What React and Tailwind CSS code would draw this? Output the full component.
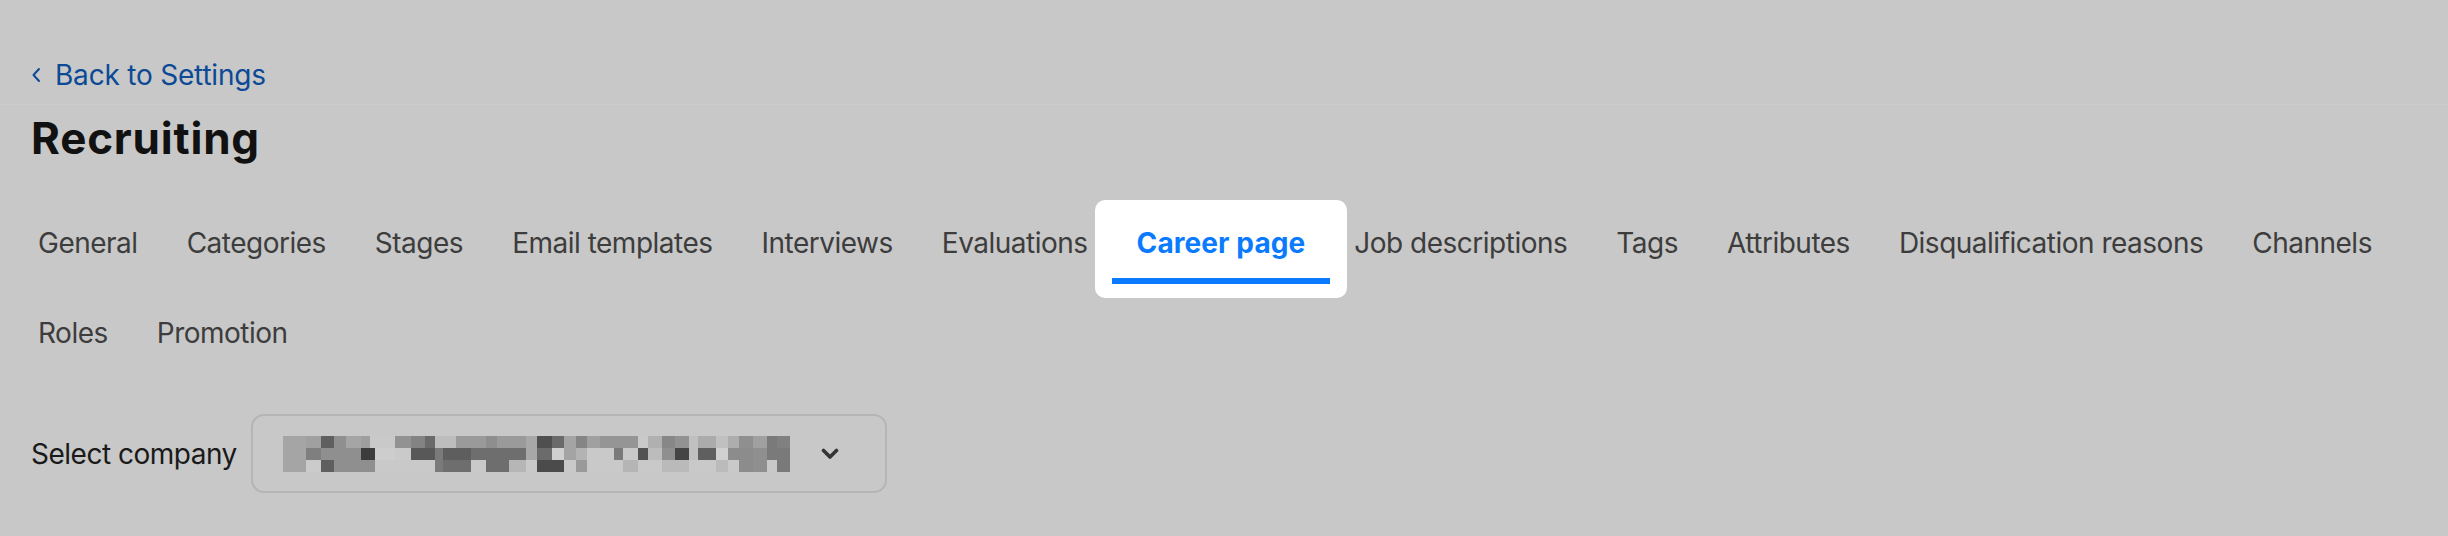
import React from 'react';

const TABS = [
  'General',
  'Categories',
  'Stages',
  'Email templates',
  'Interviews',
  'Evaluations',
  'Career page',
  'Job descriptions',
  'Tags',
  'Attributes',
  'Disqualification reasons',
  'Channels',
  'Roles',
  'Promotion',
];

const ACTIVE = 'Career page';

// blurred company name: column x-ranges with top / middle / bottom grey levels
const MOSAIC = [
  [35, 102, 'a5a5a5', 'a5a5a5', 'a5a5a5'],
  [102, 145, 'a0a0a0', '7f7f7f', 'cbcbcb'],
  [145, 183, '5f5f5f', '8f8f8f', '5f5f5f'],
  [183, 218, '8f8f8f', '8f8f8f', '8f8f8f'],
  [218, 262, 'a5a5a5', '8f8f8f', '8f8f8f'],
  [262, 287, '9f9f9f', '3c3c3c', '8f8f8f'],
  [287, 302, 'c9c9c9', '3c3c3c', '8f8f8f'],
  [302, 360, 'c9c9c9', 'cdcdcd', 'c9c9c9'],
  [360, 407, '929292', 'cacaca', 'c9c9c9'],
  [407, 447, '838383', '585858', 'c9c9c9'],
  [447, 476, '6a6a6a', '585858', 'c9c9c9'],
  [476, 500, 'bdbdbd', '7a7a7a', '7a7a7a'],
  [500, 537, 'bdbdbd', '5e5e5e', '6e6e6e'],
  [537, 580, '9a9a9a', '5e5e5e', '6e6e6e'],
  [580, 624, '9a9a9a', '6e6e6e', 'c9c9c9'],
  [624, 657, '8e8e8e', '6e6e6e', '6e6e6e'],
  [657, 690, '9a9a9a', '6e6e6e', '6e6e6e'],
  [690, 740, '9a9a9a', '6e6e6e', 'b6b6b6'],
  [740, 772, 'a8a8a8', 'a8a8a8', 'c9c9c9'],
  [772, 816, '4f4f4f', '6b6b6b', '4b4b4b'],
  [816, 851, '6a6a6a', 'd0d0d0', '4b4b4b'],
  [851, 886, 'a4a4a4', 'a4a4a4', 'c9c9c9'],
  [886, 918, '858585', 'b3b3b3', '9a9a9a'],
  [918, 955, 'a0a0a0', 'c9c9c9', 'c9c9c9'],
  [955, 996, '959595', 'c9c9c9', 'c9c9c9'],
  [996, 1022, '959595', '7a7a7a', 'c9c9c9'],
  [1022, 1066, '959595', 'c9c9c9', 'b5b5b5'],
  [1066, 1095, 'c9c9c9', '525252', 'c9c9c9'],
  [1095, 1135, 'b0b0b0', 'bcbcbc', 'c9c9c9'],
  [1135, 1172, '878787', '8f8f8f', 'bababa'],
  [1172, 1214, '929292', '444444', 'bababa'],
  [1214, 1240, 'c0c0c0', 'c0c0c0', 'c9c9c9'],
  [1240, 1292, 'ababab', '5f5f5f', 'c9c9c9'],
  [1292, 1327, 'c0c0c0', 'd0d0d0', 'bbbbbb'],
  [1327, 1359, 'adadad', '8c8c8c', 'c9c9c9'],
  [1359, 1400, '8f8f8f', '8c8c8c', '8c8c8c'],
  [1400, 1440, 'a0a0a0', '8f8f8f', '8f8f8f'],
  [1440, 1468, '7a7a7a', '7a7a7a', 'c9c9c9'],
  [1468, 1507, '808080', '7a7a7a', '7a7a7a'],
];

function Mosaic() {
  return (
    <svg
      width="507"
      height="36"
      viewBox="35 45 1472 108"
      preserveAspectRatio="none"
      shapeRendering="crispEdges"
    >
      {MOSAIC.map(([x1, x2, a, b, c]) => (
        <g key={x1}>
          <rect x={x1} y={45} width={x2 - x1} height={36} fill={`#${a}`} />
          <rect x={x1} y={81} width={x2 - x1} height={36} fill={`#${b}`} />
          <rect x={x1} y={117} width={x2 - x1} height={36} fill={`#${c}`} />
        </g>
      ))}
    </svg>
  );
}

export default function App() {
  return (
    <div className="min-h-screen bg-[#c8c8c8] font-['Inter','Noto_Sans',sans-serif]">
      {/* top bar */}
      <div className="border-b border-[#cdcdcd] px-[31px] pt-[55px] pb-[9px]">
        <a className="flex h-[40px] items-center gap-[14px] text-[28px] text-[#0c4a95] cursor-pointer">
          <svg className="w-[10px] h-[16px]" viewBox="0 0 10 16" fill="none">
            <path d="M8 2L2.5 8L8 14" stroke="#0c4a95" strokeWidth="2" strokeLinecap="round" strokeLinejoin="round" />
          </svg>
          <span className="tracking-[-0.2px]">Back to Settings</span>
        </a>
      </div>

      <div className="px-[31px]">
        <h1 className="mt-[7px] text-[44px] leading-[53px] font-bold text-[#111111] tracking-[0.8px]">
          Recruiting
        </h1>

        {/* tabs */}
        <div className="mt-[33px] flex flex-wrap items-start gap-x-[35px]">
          {TABS.map((tab) =>
            tab === ACTIVE ? (
              <div
                key={tab}
                className="mt-[2px] -mb-[10px] -mx-[35px] flex h-[98px] flex-col rounded-[10px] bg-white px-[17px] pt-[23px]"
              >
                <span className="px-[25px] text-[28px] leading-[40px] font-bold text-[#0a7bff] tracking-[0.1px]">
                  {tab}
                </span>
                <div className="mt-[15px] h-[6px] bg-[#0a7bff]" />
              </div>
            ) : (
              <div
                key={tab}
                className="flex h-[90px] items-center px-[7px] text-[28px] text-[#3d3d3d] tracking-[-0.5px] cursor-pointer"
              >
                {tab}
              </div>
            )
          )}
        </div>

        {/* company select */}
        <div className="mt-[36px] flex items-center gap-[14px]">
          <span className="text-[28px] text-[#1a1a1a] tracking-[-0.5px]">Select company</span>
          <div className="flex h-[79px] w-[636px] items-center rounded-[13px] border-2 border-[#b5b5b5] pl-[30px] pr-[46px]">
            <Mosaic />
            <div className="flex-1" />
            <svg className="w-[18px] h-[12px]" viewBox="0 0 18 12" fill="none">
              <path d="M2.5 2.5L9 9L15.5 2.5" stroke="#353535" strokeWidth="3.6" strokeLinecap="round" strokeLinejoin="round" />
            </svg>
          </div>
        </div>
      </div>
    </div>
  );
}
